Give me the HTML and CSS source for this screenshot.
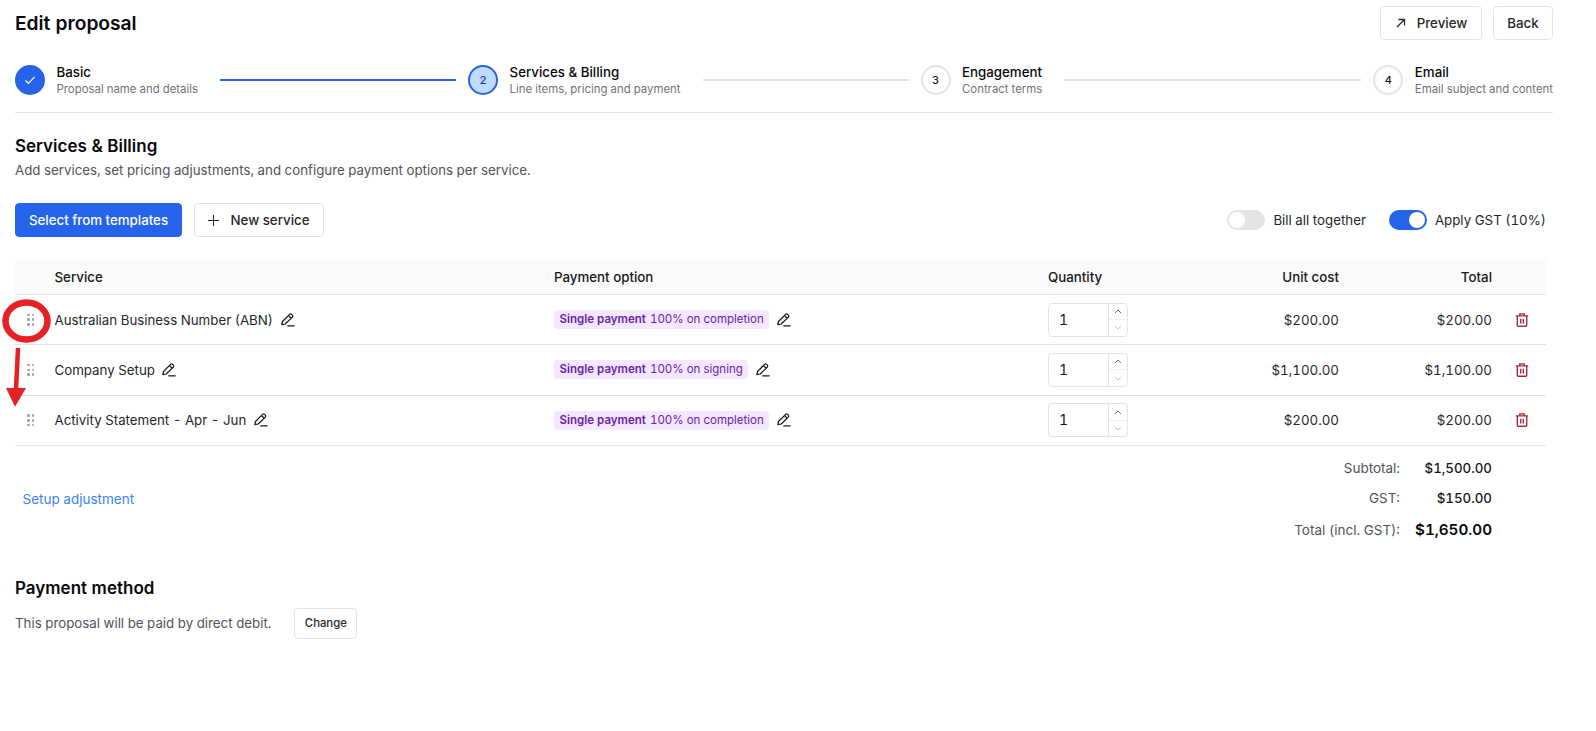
FILE: index.html
```html
<!DOCTYPE html>
<html lang="en">
<head>
<meta charset="utf-8">
<title>Edit proposal</title>
<link rel="stylesheet" href="styles.css">
</head>
<body>
<svg class="sprite" width="0" height="0" aria-hidden="true">
  <symbol id="pencil" viewBox="0 0 14 14">
    <path d="M.9 11.600 1.500 8.500 8.600 1.400a1.400 1.400 0 0 1 2 0l.7.7a1.400 1.400 0 0 1 0 2L4.200 11z" fill="none" stroke="currentColor" stroke-width="1.250" stroke-linejoin="round"/>
    <path d="M7.500 2.600 10.200 5.300M6.300 12.900H13.600" fill="none" stroke="currentColor" stroke-width="1.250"/>
  </symbol>
  <symbol id="trash" viewBox="0 0 14 14">
    <path d="M.8 2.900h12.400M4.800 2.900V.9h4.400v2M2.300 2.900v9.300c0 .6.400 1 1 1h7.400c.6 0 1-.4 1-1V2.900M5.700 5.700v4.800M8.300 5.700v4.800" fill="none" stroke="currentColor" stroke-width="1.400"/>
  </symbol>
  <symbol id="up" viewBox="0 0 8 5"><path d="M1 4 4 1l3 3" fill="none" stroke="currentColor" stroke-width="1"/></symbol>
  <symbol id="down" viewBox="0 0 8 5"><path d="M1 1l3 3 3-3" fill="none" stroke="currentColor" stroke-width="1"/></symbol>
</svg>
<main class="page">
  <header class="topbar">
    <h1 class="title">Edit proposal</h1>
    <div class="top-actions">
      <button class="btn btn-preview">
        <svg class="ic-arrow" viewBox="0 0 12 12"><path d="M2 10 9.500 2.500M3.500 2.500h6v6" fill="none" stroke="currentColor" stroke-width="1.300"/></svg>
        Preview
      </button>
      <button class="btn btn-back">Back</button>
    </div>
  </header>

  <nav class="steps">
    <div class="step">
      <span class="dot dot-done"><svg viewBox="0 0 12 12" class="ic-check"><path d="M1.500 6.500 4.500 9.500 10.500 2.800" fill="none" stroke="#fff" stroke-width="1.200"/></svg></span>
      <div><div class="step-name">Basic</div><div class="step-sub">Proposal name and details</div></div>
    </div>
    <span class="line line-a line-done"></span>
    <div class="step">
      <span class="dot dot-active">2</span>
      <div><div class="step-name">Services &amp; Billing</div><div class="step-sub">Line items, pricing and payment</div></div>
    </div>
    <span class="line line-b"></span>
    <div class="step">
      <span class="dot">3</span>
      <div><div class="step-name">Engagement</div><div class="step-sub">Contract terms</div></div>
    </div>
    <span class="line line-c"></span>
    <div class="step">
      <span class="dot">4</span>
      <div><div class="step-name">Email</div><div class="step-sub">Email subject and content</div></div>
    </div>
  </nav>

  <section class="section-head">
    <h2 class="h2">Services &amp; Billing</h2>
    <p class="lead">Add services, set pricing adjustments, and configure payment options per service.</p>
  </section>

  <div class="toolbar">
    <button class="btn btn-primary">Select from templates</button>
    <button class="btn btn-new"><span class="plus"></span>New service</button>
    <div class="toggles">
      <span class="toggle"><span class="knob"></span></span><span class="toggle-label">Bill all together</span>
      <span class="toggle toggle-on"><span class="knob"></span></span><span class="toggle-label">Apply GST (10%)</span>
    </div>
  </div>

  <div class="table">
    <div class="row row-head">
      <span></span><span>Service</span><span>Payment option</span><span>Quantity</span><span class="num">Unit cost</span><span class="num">Total</span><span></span>
    </div>
    <div class="row">
      <span class="grip"><i></i><i></i><i></i><i></i><i></i><i></i></span>
      <span class="name">Australian Business Number (ABN)<svg class="ic-pencil"><use href="#pencil"/></svg></span>
      <span class="pay"><span class="badge"><b>Single payment</b> 100% on completion</span><svg class="ic-pencil"><use href="#pencil"/></svg></span>
      <span class="qty"><span class="qty-val">1</span><span class="qty-btns"><span class="qty-btn"><svg class="ic-up"><use href="#up"/></svg></span><span class="qty-btn qty-off"><svg class="ic-up"><use href="#down"/></svg></span></span></span>
      <span class="num">$200.00</span><span class="num">$200.00</span>
      <span class="del"><svg class="ic-trash"><use href="#trash"/></svg></span>
    </div>
    <div class="row">
      <span class="grip"><i></i><i></i><i></i><i></i><i></i><i></i></span>
      <span class="name">Company Setup<svg class="ic-pencil"><use href="#pencil"/></svg></span>
      <span class="pay"><span class="badge"><b>Single payment</b> 100% on signing</span><svg class="ic-pencil"><use href="#pencil"/></svg></span>
      <span class="qty"><span class="qty-val">1</span><span class="qty-btns"><span class="qty-btn"><svg class="ic-up"><use href="#up"/></svg></span><span class="qty-btn qty-off"><svg class="ic-up"><use href="#down"/></svg></span></span></span>
      <span class="num">$1,100.00</span><span class="num">$1,100.00</span>
      <span class="del"><svg class="ic-trash"><use href="#trash"/></svg></span>
    </div>
    <div class="row">
      <span class="grip"><i></i><i></i><i></i><i></i><i></i><i></i></span>
      <span class="name">Activity Statement - Apr - Jun<svg class="ic-pencil"><use href="#pencil"/></svg></span>
      <span class="pay"><span class="badge"><b>Single payment</b> 100% on completion</span><svg class="ic-pencil"><use href="#pencil"/></svg></span>
      <span class="qty"><span class="qty-val">1</span><span class="qty-btns"><span class="qty-btn"><svg class="ic-up"><use href="#up"/></svg></span><span class="qty-btn qty-off"><svg class="ic-up"><use href="#down"/></svg></span></span></span>
      <span class="num">$200.00</span><span class="num">$200.00</span>
      <span class="del"><svg class="ic-trash"><use href="#trash"/></svg></span>
    </div>
  </div>

  <div class="summary">
    <a class="adjust">Setup adjustment</a>
    <dl class="totals">
      <dt>Subtotal:</dt><dd>$1,500.00</dd>
      <dt>GST:</dt><dd>$150.00</dd>
      <dt class="grand-row">Total (incl. GST):</dt><dd class="grand grand-row">$1,650.00</dd>
    </dl>
  </div>

  <section class="payment">
    <h2 class="h2">Payment method</h2>
    <div class="payment-row">
      <span>This proposal will be paid by direct debit.</span>
      <button class="btn btn-small">Change</button>
    </div>
  </section>

  <svg class="annotation" width="60" height="115" viewBox="0 0 60 115" aria-hidden="true">
    <ellipse cx="24.500" cy="23" rx="21" ry="18.600" fill="none" stroke="#e62024" stroke-width="6.500"/>
    <path d="M16 50 14 91" stroke="#e62024" stroke-width="4.500" fill="none"/>
    <path d="M4 90H24L13 108.700z" fill="#e62024"/>
  </svg>
</main>
</body>
</html>
```

FILE: styles.css
```css
* { box-sizing: border-box; }
html, body { margin: 0; padding: 0; background: #fff; }
body { font-family: Inter, "Liberation Sans", sans-serif; color: #18181b; font-size: 13.300px; font-variant-numeric: tabular-nums; overflow: hidden; }
.sprite { position: absolute; }
.page { position: relative; width: 1596px; height: 731px; padding: 6px 43px 0 15px; }

.topbar { display: flex; justify-content: space-between; align-items: center; height: 34px; }
.title { margin: 0; font-size: 19.200px; line-height: 34px; font-weight: 600; color: #09090b; }
.top-actions { display: flex; gap: 11px; }
.btn { display: inline-flex; align-items: center; justify-content: center; height: 34px; padding: 0; background: #fff; border: 1px solid #e4e4e7; border-radius: 4px; font: 500 13.300px Inter, sans-serif; color: #27272a; }
.btn-preview { gap: 10px; width: 102px; }
.btn-back { width: 60px; }
.ic-arrow { width: 12px; height: 12px; }

.steps { display: flex; align-items: center; margin-top: 25px; height: 30px; }
.step { display: flex; align-items: center; gap: 11.500px; flex: none; }
.dot { flex: none; display: flex; align-items: center; justify-content: center; width: 30px; height: 30px; border-radius: 50%; border: 2px solid #e4e4e7; background: #fff; font-size: 11px; font-weight: 500; color: #18181b; }
.dot-done { background: #2563eb; border-color: #2563eb; }
.dot-active { background: #bfdbfe; border-color: #2563eb; color: #1e3a8a; }
.ic-check { width: 12px; height: 12px; }
.step-name { font-size: 13.300px; line-height: 17px; font-weight: 500; color: #09090b; }
.step-sub { font-size: 11.400px; line-height: 16px; color: #71717a; white-space: nowrap; }
.line { height: 2px; margin: 0 12px 0 22px; background: #e4e4e7; }
.line-a { flex: 236 1 0; }
.line-b { flex: 206 1 0; }
.line-c { flex: 297 1 0; }
.line-done { background: #2563eb; }

.section-head { margin-top: 17px; padding-top: 23px; border-top: 1px solid #e4e4e7; }
.h2 { margin: 0; font-size: 17px; line-height: 20px; font-weight: 600; color: #09090b; }
.lead { margin: 4px 0 0; font-size: 13.300px; line-height: 20px; color: #52525b; }

.toolbar { display: flex; align-items: center; gap: 12px; margin-top: 23px; width: 1531px; }
.btn-primary { width: 167px; background: #2563eb; border-color: #2563eb; color: #fff; }
.btn-new { width: 130px; gap: 11px; }
.plus { width: 11px; height: 11px; background: linear-gradient(#27272a, #27272a) center / 100% 1px no-repeat, linear-gradient(#27272a, #27272a) center / 1px 100% no-repeat; }
.toggles { display: flex; align-items: center; margin-left: auto; }
.toggle { display: block; width: 38px; height: 20px; padding: 2px; border-radius: 10px; background: #e4e4e7; margin-right: 8px; }
.toggle-on { background: #2563eb; padding-left: 20px; }
.knob { display: block; width: 16px; height: 16px; border-radius: 50%; background: #fff; }
.toggle-label { font-size: 13.300px; color: #27272a; margin-right: 23px; }
.toggle-label:last-child { margin-right: 0; }

.table { width: 1531px; margin-top: 23px; }
.row { display: grid; grid-template-columns: 39.500px 499.500px 494px 138px 153px 153px 54px; align-items: center; height: 50.330px; border-bottom: 1px solid #e4e4e7; font-size: 13.300px; color: #27272a; }
.row-head { height: 35px; background: #fafafa; font-weight: 500; color: #18181b; }
.num { text-align: right; }
.grip { display: grid; grid-template-columns: 2.500px 2.500px; gap: 2.250px 2px; justify-self: start; margin-left: 12px; }
.grip i { width: 2.500px; height: 2.500px; background: #a1a1aa; border-radius: 1px; }
.name, .pay { display: flex; align-items: center; }
.ic-pencil { width: 14px; height: 14px; margin-left: 7.500px; color: #18181b; }
.badge { height: 19px; line-height: 19px; padding: 0 5.500px; border-radius: 4px; background: #f3e8ff; color: #6b21a8; font-size: 11.500px; white-space: nowrap; }
.badge b { font-weight: 600; margin-right: 1px; }
.qty { display: flex; width: 80px; height: 34px; border: 1px solid #e4e4e7; border-radius: 4px; }
.qty-val { flex: 1; line-height: 32px; padding-left: 10px; font-size: 14px; color: #18181b; }
.qty-btns { display: flex; flex-direction: column; width: 19px; border-left: 1px solid #e4e4e7; }
.qty-btn { flex: 1; display: flex; align-items: center; justify-content: center; color: #71717a; }
.qty-off { border-top: 1px solid #f0f0f2; color: #c4c4c8; }
.ic-up { width: 8px; height: 5px; }
.del { justify-self: end; margin-right: 17px; display: flex; }
.ic-trash { width: 14px; height: 14px; color: #a52a3a; }

.summary { width: 1477px; display: flex; justify-content: space-between; align-items: center; margin-top: 7px; }
.adjust { margin-left: 7.500px; font-size: 13.500px; color: #3b82f6; }
.totals { display: grid; grid-template-columns: auto 92px; justify-items: end; align-items: center; margin: 0; }
.totals dt { color: #52525b; font-size: 13.500px; line-height: 30px; }
.totals dd { margin: 0; font-size: 13.300px; font-weight: 500; color: #18181b; line-height: 30px; }
.totals .grand-row { line-height: 32px; padding-top: 1px; }
.totals .grand { font-size: 15.200px; font-weight: 600; color: #09090b; }

.payment { margin-top: 32px; }
.payment-row { display: flex; align-items: center; gap: 23px; margin-top: 10px; font-size: 13.300px; color: #52525b; }
.btn-small { width: 63px; height: 31px; font-size: 11.300px; }

.annotation { position: absolute; left: 2px; top: 298px; }
```
